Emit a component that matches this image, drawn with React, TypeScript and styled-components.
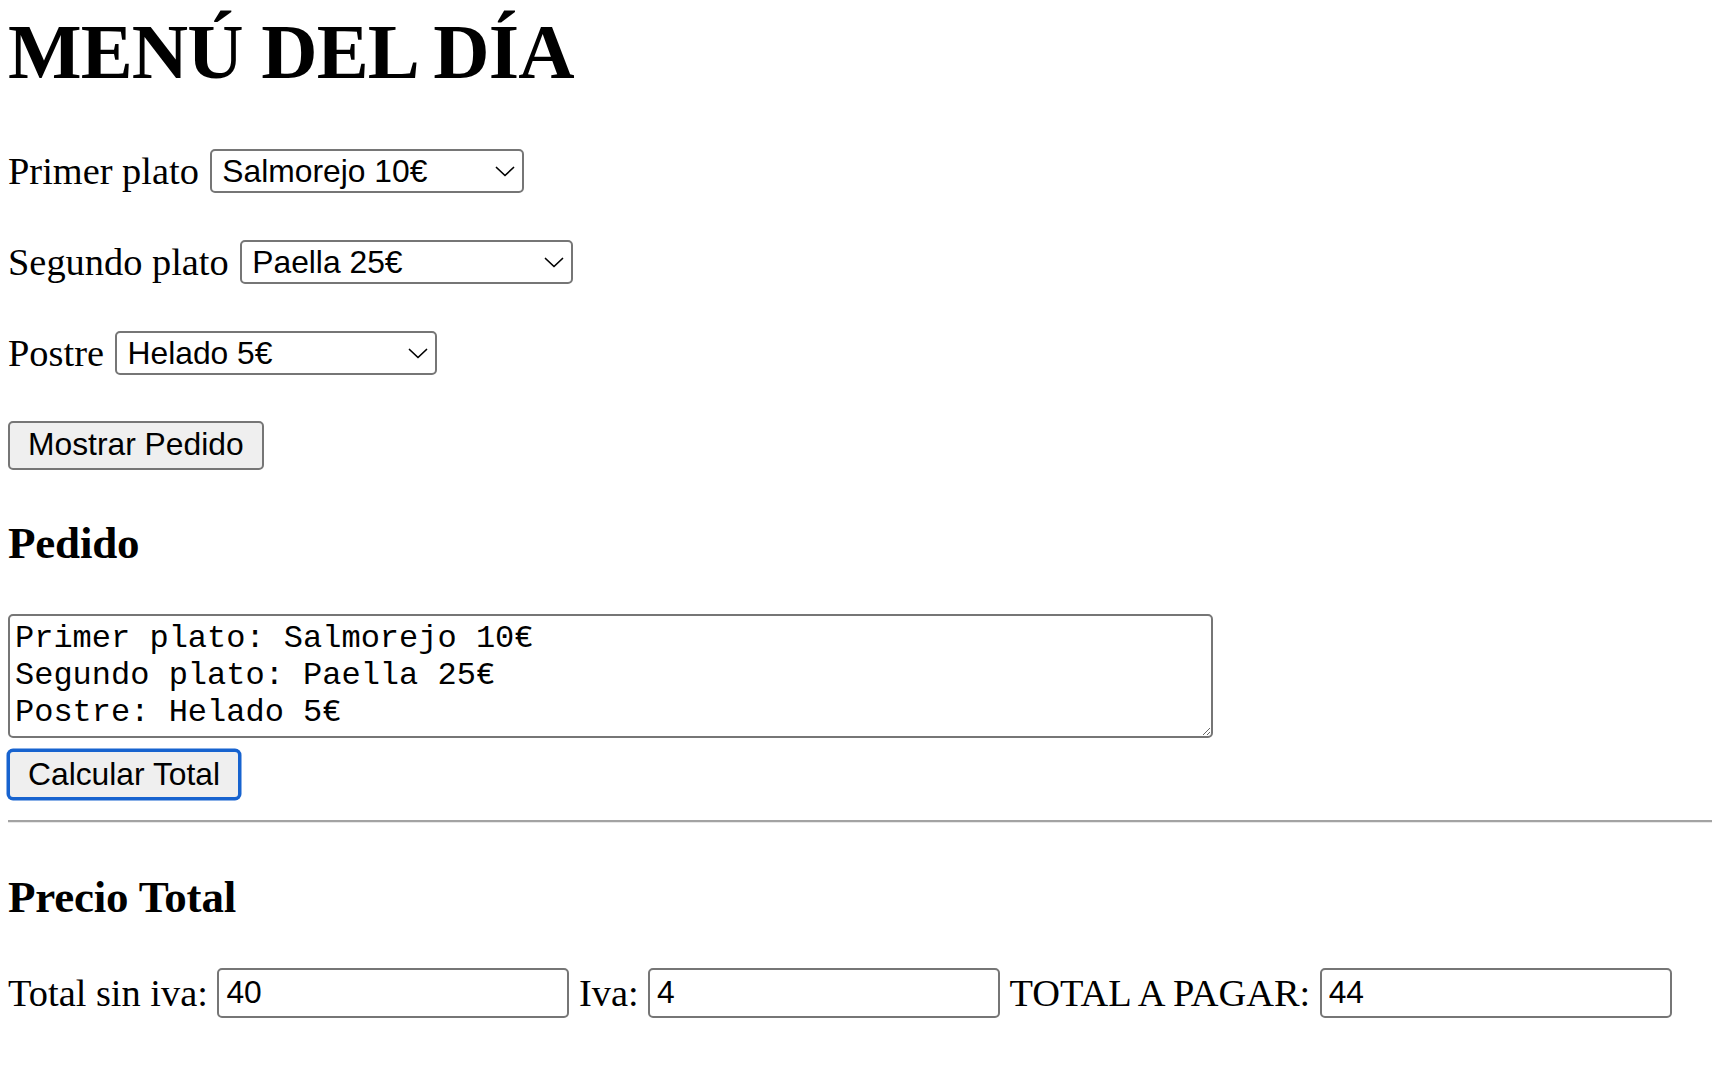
import React, { useState } from "react";
import styled, { createGlobalStyle } from "styled-components";

const GlobalStyle = createGlobalStyle`
  html, body { margin: 0; padding: 0; background: #ffffff; }
  body {
    font-family: "Liberation Serif", "Times New Roman", serif;
    color: #000000;
    overflow: hidden;
  }
`;

const Page = styled.main`
  display: flex;
  flex-direction: column;
  align-items: flex-start;
  padding: 7.5px 0 40px 8px;
`;

const Title = styled.h1`
  margin: 0;
  font-size: 78px;
  line-height: 88px;
  font-weight: 700;
  letter-spacing: -0.9px;
  white-space: nowrap;
`;

const SubTitle = styled.h3<{ $mt: number }>`
  margin: ${(p) => p.$mt}px 0 0 0;
  font-size: 45px;
  line-height: 51px;
  font-weight: 700;
  letter-spacing: -0.2px;
  white-space: nowrap;
`;

const Row = styled.div<{ $mt: number; $gap?: number }>`
  display: flex;
  align-items: center;
  gap: ${(p) => p.$gap ?? 11.5}px;
  margin-top: ${(p) => p.$mt}px;
`;

const Label = styled.label`
  font-size: 38.4px;
  line-height: 44px;
  white-space: nowrap;
`;

const SelectWrap = styled.span`
  position: relative;
  display: inline-flex;
`;

const Select = styled.select<{ $w: number }>`
  appearance: none;
  -webkit-appearance: none;
  box-sizing: border-box;
  width: ${(p) => p.$w}px;
  height: 44px;
  margin: 0;
  padding: 0 36px 0 10px;
  border: 2px solid #767676;
  border-radius: 5px;
  background: #ffffff;
  color: #000000;
  font-family: "Liberation Sans", Arial, sans-serif;
  font-size: 31.8px;
  outline: none;
`;

const Chevron = styled.svg`
  position: absolute;
  right: 9px;
  top: 50%;
  width: 20px;
  height: 11px;
  margin-top: -5px;
  pointer-events: none;
`;

const Button = styled.button<{ $mt: number; $focused?: boolean }>`
  box-sizing: border-box;
  height: 49px;
  margin: ${(p) => p.$mt}px 0 0 0;
  padding: 0 18px;
  border: 2px solid ${(p) => (p.$focused ? "#1763cf" : "#767676")};
  border-radius: 5px;
  background: #efefef;
  color: #000000;
  font-family: "Liberation Sans", Arial, sans-serif;
  font-size: 31.8px;
  line-height: 1;
  white-space: nowrap;
  box-shadow: ${(p) => (p.$focused ? "0 0 0 1.5px #1763cf" : "none")};
  outline: none;
  cursor: default;
`;

const TextArea = styled.textarea<{ $mt: number }>`
  box-sizing: border-box;
  width: 1205px;
  height: 124px;
  margin: ${(p) => p.$mt}px 0 0 0;
  padding: 4.5px 5px;
  border: 2px solid #767676;
  border-radius: 5px;
  background: #ffffff;
  color: #000000;
  font-family: "Liberation Mono", "Courier New", monospace;
  font-size: 32px;
  line-height: 37px;
  outline: none;
  overflow: hidden;
`;

const Rule = styled.hr<{ $mt: number }>`
  align-self: stretch;
  box-sizing: border-box;
  height: 0;
  margin: ${(p) => p.$mt}px 0 0 0;
  border: none;
  border-top: 2px solid #a3a3a3;
  border-bottom: 1px solid #e8e8e8;
`;

const Field = styled.input`
  box-sizing: border-box;
  width: 352px;
  height: 50px;
  margin: 0;
  padding: 0 7px;
  border: 2px solid #767676;
  border-radius: 5px;
  background: #ffffff;
  color: #000000;
  font-family: "Liberation Sans", Arial, sans-serif;
  font-size: 31.8px;
  outline: none;
`;

type Dish = { name: string; price: number };

const primeros: Dish[] = [
  { name: "Salmorejo", price: 10 },
  { name: "Gazpacho", price: 8 },
  { name: "Ensalada", price: 7 },
];
const segundos: Dish[] = [
  { name: "Paella", price: 25 },
  { name: "Entrecot", price: 22 },
  { name: "Merluza", price: 18 },
];
const postres: Dish[] = [
  { name: "Helado", price: 5 },
  { name: "Flan", price: 4 },
  { name: "Tarta de queso", price: 6 },
];

const label = (d: Dish) => `${d.name} ${d.price}€`;

function ChevronIcon() {
  return (
    <Chevron viewBox="0 0 20 11" aria-hidden="true">
      <polyline
        points="1.5,1.5 10,9.5 18.5,1.5"
        fill="none"
        stroke="#000"
        strokeWidth="1.7"
        strokeLinecap="round"
        strokeLinejoin="round"
      />
    </Chevron>
  );
}

function DishSelect({
  id,
  dishes,
  value,
  width,
  onChange,
}: {
  id: string;
  dishes: Dish[];
  value: number;
  width: number;
  onChange: (i: number) => void;
}) {
  return (
    <SelectWrap>
      <Select
        id={id}
        $w={width}
        value={value}
        onChange={(e) => onChange(Number(e.target.value))}
      >
        {dishes.map((d, i) => (
          <option key={d.name} value={i}>
            {label(d)}
          </option>
        ))}
      </Select>
      <ChevronIcon />
    </SelectWrap>
  );
}

export default function App() {
  const [p1, setP1] = useState(0);
  const [p2, setP2] = useState(0);
  const [p3, setP3] = useState(0);
  const [pedido, setPedido] = useState(
    "Primer plato: Salmorejo 10€\nSegundo plato: Paella 25€\nPostre: Helado 5€"
  );
  const [total, setTotal] = useState({ base: "40", iva: "4", pagar: "44" });

  const mostrar = () => {
    setPedido(
      `Primer plato: ${label(primeros[p1])}\nSegundo plato: ${label(
        segundos[p2]
      )}\nPostre: ${label(postres[p3])}`
    );
  };

  const calcular = () => {
    const base = primeros[p1].price + segundos[p2].price + postres[p3].price;
    const iva = Math.round(base * 0.1 * 100) / 100;
    setTotal({ base: String(base), iva: String(iva), pagar: String(base + iva) });
  };

  return (
    <>
      <GlobalStyle />
      <Page>
        <Title>MENÚ DEL DÍA</Title>

        <Row $mt={53}>
          <Label htmlFor="primero">Primer plato</Label>
          <DishSelect id="primero" dishes={primeros} value={p1} width={314} onChange={setP1} />
        </Row>

        <Row $mt={47}>
          <Label htmlFor="segundo">Segundo plato</Label>
          <DishSelect id="segundo" dishes={segundos} value={p2} width={333} onChange={setP2} />
        </Row>

        <Row $mt={47.5}>
          <Label htmlFor="postre">Postre</Label>
          <DishSelect id="postre" dishes={postres} value={p3} width={322} onChange={setP3} />
        </Row>

        <Button $mt={45.5} type="button" onClick={mostrar}>
          Mostrar Pedido
        </Button>

        <SubTitle $mt={48}>Pedido</SubTitle>

        <TextArea
          $mt={45}
          value={pedido}
          onChange={(e) => setPedido(e.target.value)}
        />

        <Button $mt={12.5} $focused type="button" onClick={calcular}>
          Calcular Total
        </Button>

        <Rule $mt={20.5} />

        <SubTitle $mt={49.5}>Precio Total</SubTitle>

        <Row $mt={44.5} $gap={9.5}>
          <Label htmlFor="base">Total sin iva:</Label>
          <Field id="base" value={total.base} readOnly />
          <Label htmlFor="iva">Iva:</Label>
          <Field id="iva" value={total.iva} readOnly />
          <Label htmlFor="pagar">TOTAL A PAGAR:</Label>
          <Field id="pagar" value={total.pagar} readOnly />
        </Row>
      </Page>
    </>
  );
}
